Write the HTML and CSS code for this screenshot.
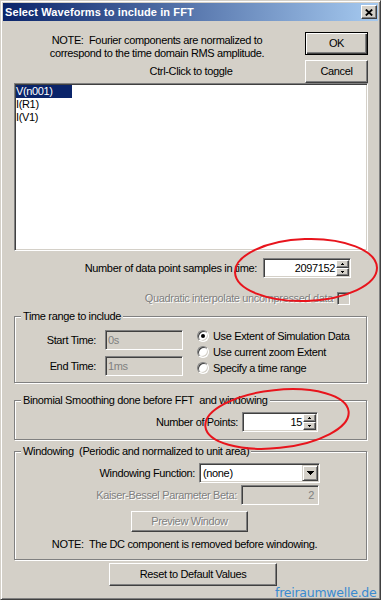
FILE: index.html
```html
<!DOCTYPE html>
<html>
<head>
<meta charset="utf-8">
<title>Select Waveforms to include in FFT</title>
<link rel="stylesheet" href="styles.css">
</head>
<body>
<div class="window">
  <div class="titlebar">
    <span class="title">Select Waveforms to include in FFT</span>
    <span class="close"><svg width="8" height="7" viewBox="0 0 8 7"><path d="M0.8 0.5L7.2 6.5M7.2 0.5L0.8 6.5" stroke="#000" stroke-width="1.8" fill="none"/></svg></span>
  </div>
  <div class="client">
    <div class="top">
      <div class="notes">
        <p class="note">NOTE:&nbsp; Fourier components are normalized to<br>correspond to the time domain RMS amplitude.</p>
        <p class="hint">Ctrl-Click to toggle</p>
      </div>
      <div class="btncol">
        <div class="btn default">OK</div>
        <div class="btn">Cancel</div>
      </div>
    </div>

    <div class="listbox">
      <div class="item sel">V(n001)</div>
      <div class="item">I(R1)</div>
      <div class="item">I(V1)</div>
    </div>

    <div class="row samples">
      <span class="lbl">Number of data point samples in time:</span>
      <div class="spin spin-samples">
        <span class="val">2097152</span>
        <span class="updown">
          <i class="arrowbtn"><svg width="3" height="2" viewBox="0 0 3 2" shape-rendering="crispEdges"><rect x="1" y="0" width="1" height="1"/><rect x="0" y="1" width="3" height="1"/></svg></i>
          <i class="arrowbtn"><svg width="3" height="2" viewBox="0 0 3 2" shape-rendering="crispEdges"><rect x="0" y="0" width="3" height="1"/><rect x="1" y="1" width="1" height="1"/></svg></i>
        </span>
      </div>
    </div>

    <div class="row quad">
      <span class="lbl disabled">Quadratic interpolate uncompressed data</span>
      <span class="check"></span>
    </div>

    <fieldset class="group g-time">
      <legend>Time range to include</legend>
      <div class="tr">
        <div class="tr-left">
          <div class="frow"><span class="flbl">Start Time:</span><span class="field">0s</span></div>
          <div class="frow"><span class="flbl">End Time:</span><span class="field">1ms</span></div>
        </div>
        <div class="radios">
          <div class="radio"><span class="rb on"></span><span>Use Extent of Simulation Data</span></div>
          <div class="radio"><span class="rb"></span><span>Use current zoom Extent</span></div>
          <div class="radio"><span class="rb"></span><span>Specify a time range</span></div>
        </div>
      </div>
    </fieldset>

    <fieldset class="group g-binom">
      <legend>Binomial Smoothing done before FFT&nbsp; and windowing</legend>
      <div class="row points">
        <span class="lbl">Number of Points:</span>
        <div class="spin spin-points">
          <span class="val">15</span>
          <span class="updown">
            <i class="arrowbtn"><svg width="3" height="2" viewBox="0 0 3 2" shape-rendering="crispEdges"><rect x="1" y="0" width="1" height="1"/><rect x="0" y="1" width="3" height="1"/></svg></i>
            <i class="arrowbtn"><svg width="3" height="2" viewBox="0 0 3 2" shape-rendering="crispEdges"><rect x="0" y="0" width="3" height="1"/><rect x="1" y="1" width="1" height="1"/></svg></i>
          </span>
        </div>
      </div>
    </fieldset>

    <fieldset class="group g-win">
      <legend>Windowing&nbsp; (Periodic and normalized to unit area)</legend>
      <div class="row wfunc">
        <span class="lbl">Windowing Function:</span>
        <div class="combo">
          <span class="cval">(none)</span>
          <span class="dropbtn"><svg width="7" height="4" viewBox="0 0 7 4" shape-rendering="crispEdges"><rect x="0" y="0" width="7" height="1"/><rect x="1" y="1" width="5" height="1"/><rect x="2" y="2" width="3" height="1"/><rect x="3" y="3" width="1" height="1"/></svg></span>
        </div>
      </div>
      <div class="row kaiser">
        <span class="lbl disabled">Kaiser-Bessel Parameter Beta:</span>
        <span class="field field-right">2</span>
      </div>
      <div class="btn preview"><span class="disabled">Preview Window</span></div>
      <p class="dcnote">NOTE:&nbsp; The DC component is removed before windowing.</p>
    </fieldset>

    <div class="btn reset">Reset to Default Values</div>
  </div>

  <div class="wm">freiraumwelle.de</div>

  <svg class="marks" width="381" height="600" viewBox="0 0 381 600">
    <ellipse cx="306" cy="270" rx="71" ry="31" transform="rotate(-2 306 270)" fill="none" stroke="#e8141c" stroke-width="2"/>
    <ellipse cx="277" cy="419" rx="72" ry="29" transform="rotate(-6 277 419)" fill="none" stroke="#e8141c" stroke-width="2"/>
  </svg>
</div>
</body>
</html>
```

FILE: styles.css
```css
* { box-sizing: border-box; }
html, body { margin: 0; padding: 0; }
body {
  background: #d4d0c8;
  font-family: "Liberation Sans", Arial, sans-serif;
  font-size: 11px;
  line-height: 13px;
  letter-spacing: -0.35px;
  color: #000;
}

.window {
  position: relative;
  width: 381px;
  height: 600px;
  background: #d4d0c8;
  border: 1px solid;
  border-color: #d4d0c8 #404040 #404040 #d4d0c8;
  box-shadow: inset 1px 1px #fff, inset -1px -1px #808080;
  padding: 2px;
  overflow: hidden;
}

/* title bar */
.titlebar {
  height: 18px;
  display: flex;
  align-items: center;
  justify-content: space-between;
  padding: 0 1px 0 2px;
  background: linear-gradient(to right, #0a246a, #a6caf0);
}
.title {
  color: #fff;
  font-weight: bold;
  letter-spacing: 0.1px;
}
.close {
  width: 16px;
  height: 14px;
  display: flex;
  align-items: center;
  justify-content: center;
  background: #d4d0c8;
  border: 1px solid;
  border-color: #fff #404040 #404040 #fff;
  box-shadow: inset -1px -1px #808080;
}

/* client */
.client {
  padding: 11px 10px 0 11px;
}
.top {
  display: flex;
  height: 51px;
}
.notes {
  width: 286px;
  padding-top: 2px;
}
.note {
  margin: 0;
  text-align: center;
}
.hint {
  margin: 5px 0 0;
  padding-left: 68px;
  text-align: center;
}
.btncol {
  margin-left: 5px;
  width: 63px;
  display: flex;
  flex-direction: column;
  gap: 5px;
}

.btn {
  height: 23px;
  display: flex;
  align-items: center;
  justify-content: center;
  background: #d4d0c8;
  border: 1px solid;
  border-color: #fff #404040 #404040 #fff;
  box-shadow: inset -1px -1px #808080;
}
.btn.default {
  border-color: #000;
  box-shadow: inset 1px 1px #fff, inset -1px -1px #404040, inset -2px -2px #808080;
}

.disabled {
  color: #808080;
  text-shadow: 1px 1px 0 #fff;
}

/* listbox */
.listbox {
  height: 168px;
  background: #fff;
  border: 1px solid;
  border-color: #808080 #fff #fff #808080;
  box-shadow: inset 1px 1px #404040, inset -1px -1px #d4d0c8;
  padding: 1px;
}
.item {
  height: 13px;
  width: 56px;
  white-space: nowrap;
}
.item.sel {
  background: #0a246a;
  color: #fff;
}

/* generic rows */
.row {
  display: flex;
  align-items: center;
  justify-content: flex-end;
}
.samples {
  margin-top: 7px;
  padding-right: 17px;
  gap: 6px;
}
.quad {
  margin-top: 14px;
  height: 13px;
  padding-right: 18px;
  gap: 4px;
}

/* spin box */
.spin {
  height: 20px;
  display: flex;
  background: #fff;
  border: 1px solid;
  border-color: #808080 #fff #fff #808080;
  box-shadow: inset 1px 1px #404040, inset -1px -1px #d4d0c8;
  padding: 1px;
}
.spin-samples { width: 88px; }
.spin-points { width: 76px; }
.spin .val {
  flex: 1;
  text-align: right;
  line-height: 16px;
  padding-right: 1px;
}
.updown {
  width: 13px;
  display: flex;
  flex-direction: column;
}
.arrowbtn {
  flex: 1;
  display: flex;
  align-items: center;
  justify-content: center;
  background: #d4d0c8;
  border: 1px solid;
  border-color: #fff #404040 #404040 #fff;
  box-shadow: inset -1px -1px #808080;
}
.arrowbtn svg, .dropbtn svg { fill: #000; display: block; }

/* checkbox */
.check {
  width: 13px;
  height: 13px;
  background: #d4d0c8;
  border: 1px solid;
  border-color: #808080 #fff #fff #808080;
  box-shadow: inset 1px 1px #404040, inset -1px -1px #d4d0c8;
}

/* group boxes */
.group {
  margin: 5px 1px 0 0;
  min-width: 0;
  border: 1px solid #808080;
  box-shadow: 1px 1px 0 #fff, inset 1px 1px 0 #fff;
  padding: 7px 0 6px 6px;
}
.group legend {
  padding: 0 2px;
  line-height: 13px;
  background: #d4d0c8;
}
.g-binom {
  margin-top: 11px;
  padding: 5px 0 7px 6px;
}
.g-win {
  margin-top: 5px;
  padding: 5px 0 8px 6px;
}

/* time range */
.tr {
  display: flex;
}
.tr-left {
  display: flex;
  flex-direction: column;
  gap: 6px;
}
.frow {
  display: flex;
  align-items: center;
}
.flbl {
  width: 75px;
  text-align: right;
  margin-right: 9px;
}
.field {
  width: 78px;
  height: 20px;
  background: #d4d0c8;
  color: #808080;
  border: 1px solid;
  border-color: #808080 #fff #fff #808080;
  box-shadow: inset 1px 1px #404040, inset -1px -1px #d4d0c8;
  padding: 1px 2px;
  line-height: 16px;
}
.field-right {
  text-align: right;
  padding-right: 4px;
}
.radios {
  margin-left: 14px;
  margin-top: -2px;
  display: flex;
  flex-direction: column;
}
.radio {
  height: 16px;
  display: flex;
  align-items: center;
  gap: 4px;
}
.rb {
  position: relative;
  width: 12px;
  height: 12px;
  border-radius: 50%;
  background: #fff;
  border: 1px solid;
  border-color: #808080 #fff #fff #808080;
  box-shadow: inset 1px 1px #404040, inset -1px -1px #d4d0c8;
}
.rb.on::after {
  content: "";
  position: absolute;
  left: 3px;
  top: 3px;
  width: 4px;
  height: 4px;
  border-radius: 50%;
  background: #000;
}

/* binomial */
.points {
  margin-right: 48px;
  gap: 4px;
}

/* windowing */
.wfunc {
  margin-right: 46px;
  gap: 4px;
}
.combo {
  width: 121px;
  height: 20px;
  display: flex;
  background: #fff;
  border: 1px solid;
  border-color: #808080 #fff #fff #808080;
  box-shadow: inset 1px 1px #404040, inset -1px -1px #d4d0c8;
  padding: 1px;
}
.cval {
  flex: 1;
  line-height: 16px;
  padding-left: 2px;
}
.dropbtn {
  width: 16px;
  display: flex;
  align-items: center;
  justify-content: center;
  background: #d4d0c8;
  border: 1px solid;
  border-color: #d4d0c8 #404040 #404040 #d4d0c8;
  box-shadow: inset 1px 1px #fff, inset -1px -1px #808080;
}
.kaiser {
  margin-top: 2px;
  margin-right: 47px;
  gap: 4px;
}
.preview {
  margin: 6px 0 0 110px;
  width: 117px;
  height: 21px;
}
.dcnote {
  margin: 6px 0 0;
  padding-right: 18px;
  text-align: center;
}

.reset {
  margin: 3px 0 0 95px;
  width: 168px;
}

/* watermark & annotation overlays */
.wm {
  position: absolute;
  left: 274px;
  top: 584px;
  font-family: "DejaVu Sans", sans-serif;
  font-size: 12.5px;
  line-height: 15px;
  letter-spacing: -0.25px;
  color: #3a8ad0;
  white-space: nowrap;
}
.marks {
  position: absolute;
  left: -1px;
  top: -1px;
  pointer-events: none;
}
```
